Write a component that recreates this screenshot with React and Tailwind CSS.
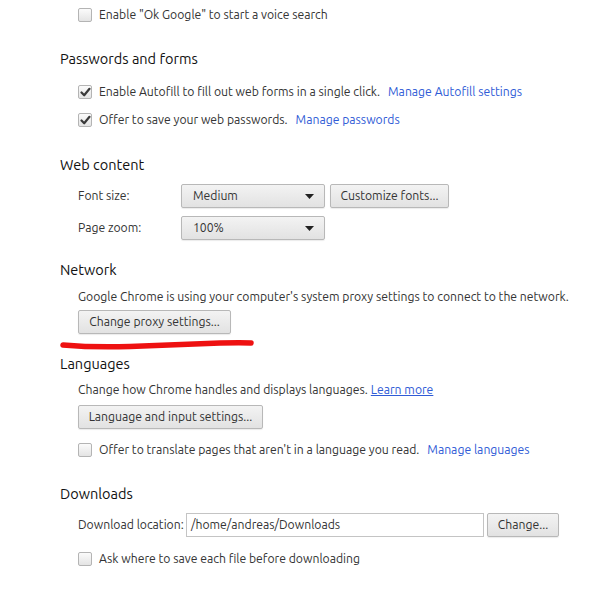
import React from "react";

const font = { fontFamily: "Ubuntu, 'Open Sans', 'Noto Sans', sans-serif" };

function Box({ checked }) {
  return (
    <span className="relative inline-block w-[14px] h-[14px] rounded-[2px] border border-[#b4b4b4] bg-gradient-to-b from-[#fbfbfb] to-[#e4e4e4] shrink-0">
      {checked && (
        <svg className="absolute left-[1px] top-[1px]" width="11" height="11" viewBox="0 0 11 11">
          <path d="M1.5 5.5 L4.2 8.3 L9.5 1.8" fill="none" stroke="#3a3a3a" strokeWidth="2.2" strokeLinecap="round" strokeLinejoin="round" />
        </svg>
      )}
    </span>
  );
}

function Check({ checked, children, className = "" }) {
  return (
    <div className={`flex items-center h-[28px] pl-[18px] ${className}`}>
      <Box checked={checked} />
      <span className="ml-[7px] text-[12.2px] text-[#333] whitespace-nowrap">{children}</span>
    </div>
  );
}

function Heading({ children, className = "" }) {
  return <div className={`h-[24px] flex items-center text-[14.5px] text-[#111] ${className}`}>{children}</div>;
}

function Btn({ children, className = "" }) {
  return (
    <button className={`h-[24px] px-[10px] rounded-[2px] border border-[#b8b8b8] bg-gradient-to-b from-[#f3f3f3] to-[#e2e2e2] shadow-[0_1px_1px_rgba(0,0,0,0.08)] text-[12.2px] text-[#333] whitespace-nowrap flex items-center justify-center ${className}`}>
      {children}
    </button>
  );
}

function Select({ children }) {
  return (
    <div className="w-[144px] h-[24px] px-[11px] rounded-[2px] border border-[#b8b8b8] bg-gradient-to-b from-[#f3f3f3] to-[#e2e2e2] shadow-[0_1px_1px_rgba(0,0,0,0.08)] text-[12.2px] text-[#333] flex items-center justify-between">
      <span>{children}</span>
      <svg width="9" height="5" viewBox="0 0 9 5" className="mr-[-1px]">
        <path d="M0 0 L9 0 L4.5 5 Z" fill="#222" />
      </svg>
    </div>
  );
}

const link = "text-[#2f5bd6]";

export default function App() {
  return (
    <div className="w-[605px] h-[593px] bg-white overflow-hidden pl-[60px] pt-[1px]" style={font}>
      <Check>Enable "Ok Google" to start a voice search</Check>

      <Heading className="mt-[18px]">Passwords and forms</Heading>
      <Check checked className="mt-[7px]">
        Enable Autofill to fill out web forms in a single click.<span className={`ml-[8px] ${link}`}>Manage Autofill settings</span>
      </Check>
      <Check checked>
        Offer to save your web passwords.<span className={`ml-[8px] ${link}`}>Manage passwords</span>
      </Check>

      <Heading className="mt-[19px]">Web content</Heading>
      <div className="mt-[7px] flex items-center h-[24px] pl-[18px]">
        <span className="w-[103px] text-[12.2px] text-[#333]">Font size:</span>
        <Select>Medium</Select>
        <Btn className="ml-[5px] w-[119px]">Customize fonts...</Btn>
      </div>
      <div className="mt-[8px] flex items-center h-[24px] pl-[18px]">
        <span className="w-[103px] text-[12.2px] text-[#333]">Page zoom:</span>
        <Select>100%</Select>
      </div>

      <Heading className="mt-[18px]">Network</Heading>
      <div className="mt-[5px] h-[20px] flex items-center pl-[18px] text-[12.2px] text-[#333] whitespace-nowrap">
        Google Chrome is using your computer's system proxy settings to connect to the network.
      </div>
      <div className="mt-[3px] pl-[18px] flex">
        <Btn className="w-[153px]">Change proxy settings...</Btn>
      </div>
      <svg width="200" height="18" viewBox="0 0 200 18" className="block">
        <path d="M3 11 C 20 12.5, 40 13.5, 70 12.5 C 100 11.5, 130 10, 160 9 C 175 8.5, 185 8.5, 191 9" fill="none" stroke="#ee1111" strokeWidth="5.5" strokeLinecap="round" />
      </svg>

      <Heading>Languages</Heading>
      <div className="mt-[4px] h-[20px] flex items-center pl-[18px] text-[12.2px] text-[#333] whitespace-nowrap">
        Change how Chrome handles and displays languages.<span className={`ml-[3px] underline ${link}`}>Learn more</span>
      </div>
      <div className="mt-[5px] pl-[18px] flex">
        <Btn className="w-[185px]">Language and input settings...</Btn>
      </div>
      <Check className="mt-[7px]">
        Offer to translate pages that aren't in a language you read.<span className={`ml-[8px] ${link}`}>Manage languages</span>
      </Check>

      <Heading className="mt-[18px]">Downloads</Heading>
      <div className="mt-[7px] flex items-center h-[24px] pl-[18px]">
        <span className="w-[106px] text-[12.2px] text-[#333] whitespace-nowrap">Download location:</span>
        <div className="ml-[2px] w-[298px] h-[24px] border border-[#c4c4c4] bg-white flex items-center px-[4px] text-[12.2px] text-[#333]">
          /home/andreas/Downloads
        </div>
        <Btn className="ml-[3px] w-[72px]">Change...</Btn>
      </div>
      <Check className="mt-[8px]">Ask where to save each file before downloading</Check>
    </div>
  );
}
